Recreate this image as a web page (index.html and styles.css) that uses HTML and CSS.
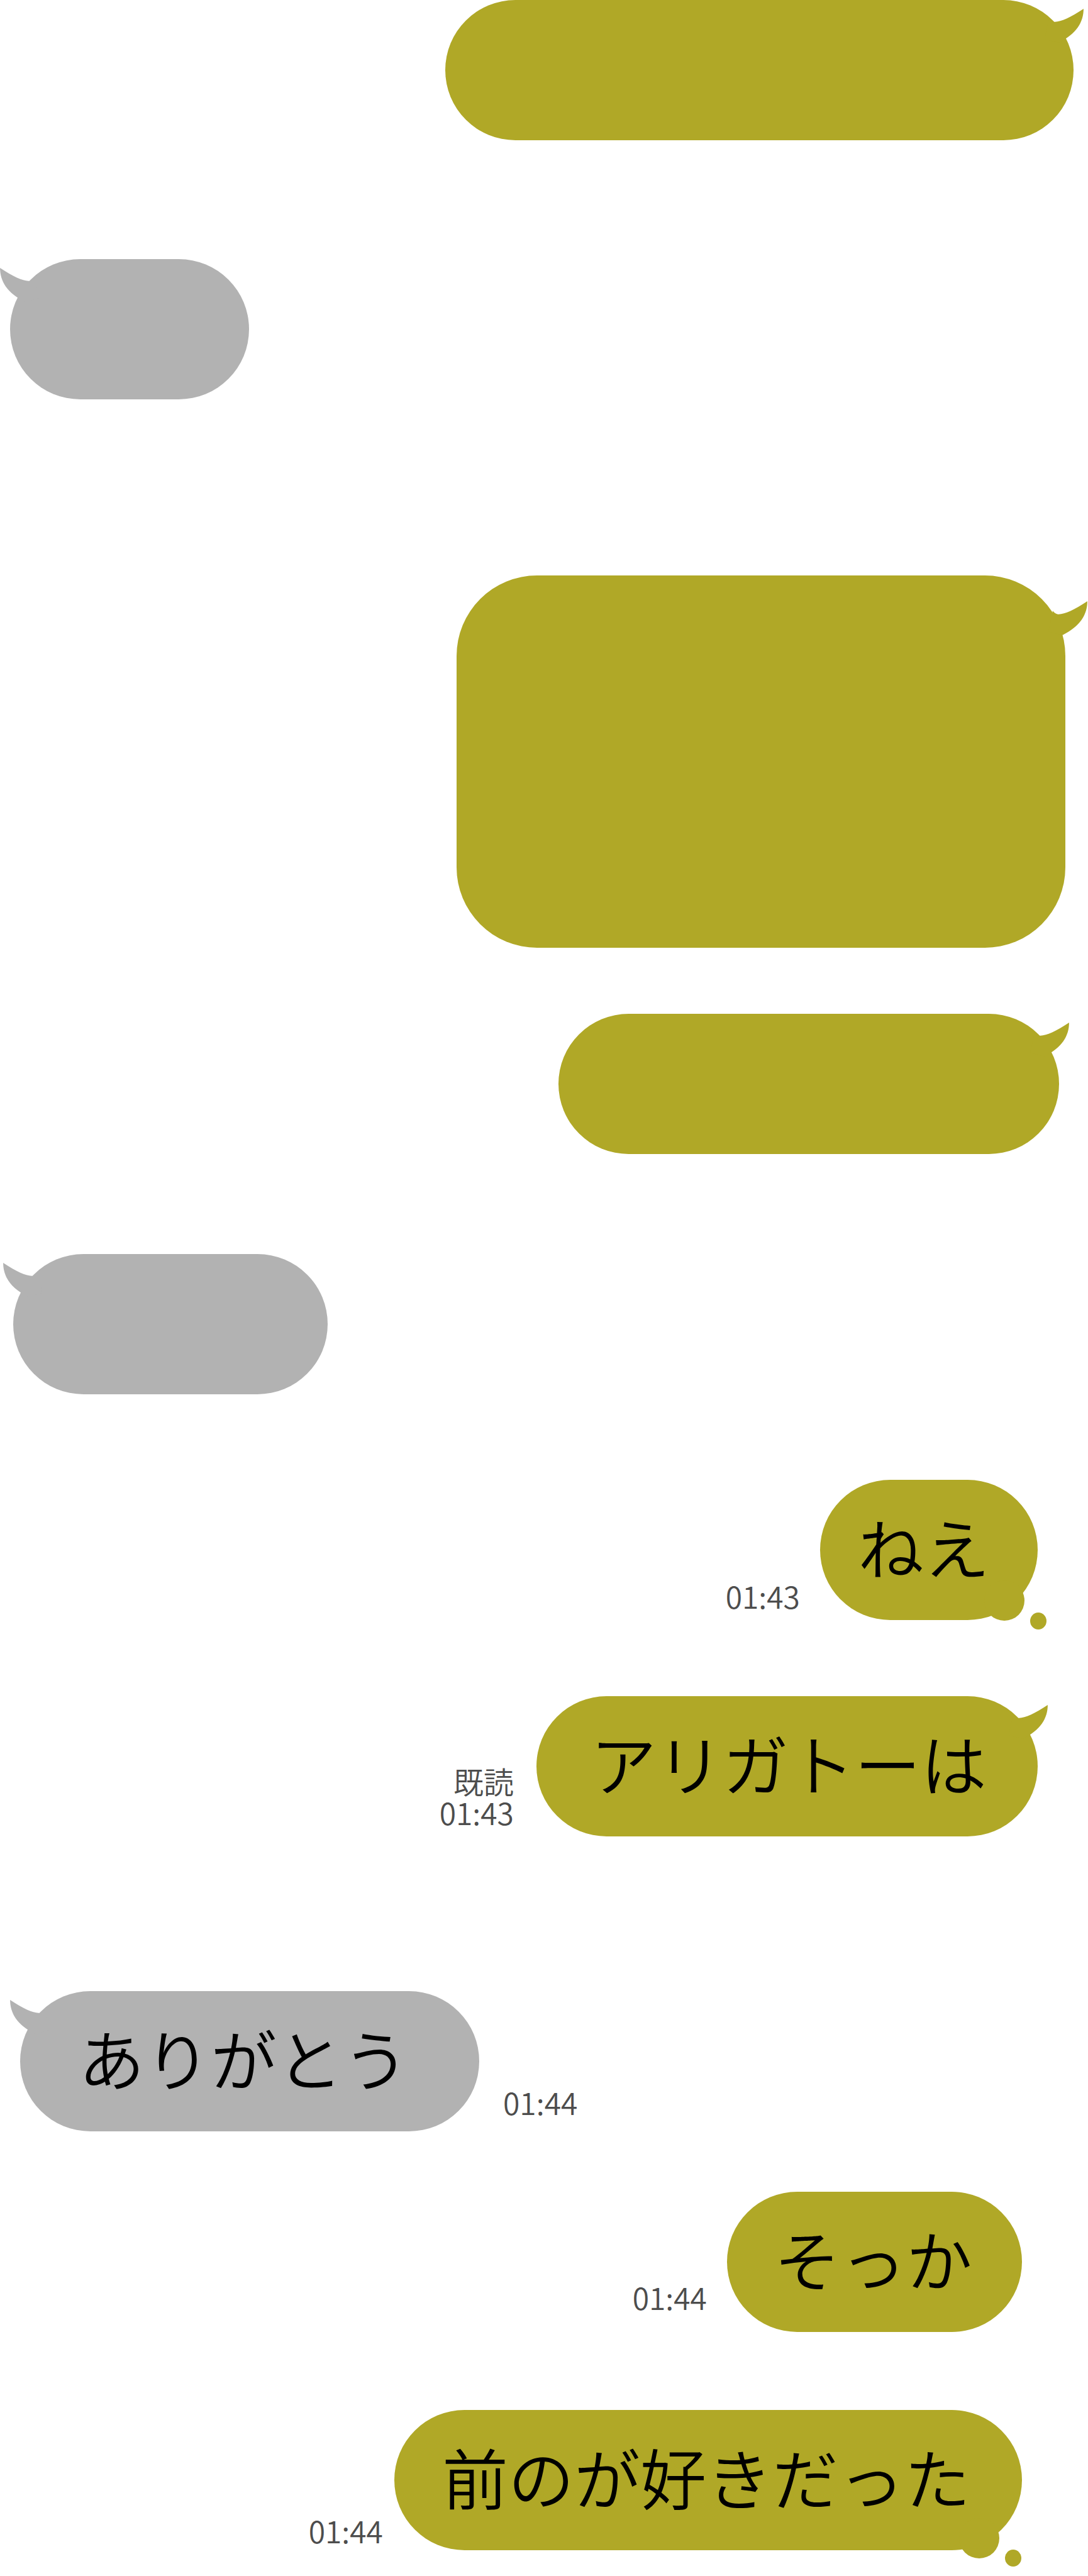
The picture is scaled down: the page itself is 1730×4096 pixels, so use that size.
FILE: index.html
```html
<!DOCTYPE html>
<html lang="ja">
<head>
<meta charset="utf-8">
<meta name="viewport" content="width=device-width, initial-scale=1">
<title>トーク</title>
<link rel="stylesheet" href="styles.css">
</head>
<body>
<svg class="defs" aria-hidden="true">
  <symbol id="tail" viewBox="-90 0 90 80">
    <path d="M0 0C-30 20-52 30-66 30C-72 30-77 26-80 22L-90 70L-57 78C-16 58 0 30 0 0Z"/>
  </symbol>
</svg>
<main class="talk">
  <div class="row sent first">
    <div class="bubble wide"><svg class="tail" aria-hidden="true"><use href="#tail"/></svg></div>
  </div>
  <div class="row received reply-short">
    <div class="bubble short"><svg class="tail" aria-hidden="true"><use href="#tail"/></svg></div>
  </div>
  <div class="row sent block">
    <div class="bubble tall"><svg class="tail" aria-hidden="true"><use href="#tail"/></svg></div>
  </div>
  <div class="row sent follow">
    <div class="bubble medium"><svg class="tail" aria-hidden="true"><use href="#tail"/></svg></div>
  </div>
  <div class="row received reply-long">
    <div class="bubble long"><svg class="tail" aria-hidden="true"><use href="#tail"/></svg></div>
  </div>
  <div class="row sent hey">
    <div class="meta"><time>01:43</time></div>
    <div class="bubble thought"><p>ねえ</p></div>
  </div>
  <div class="row sent thanks-q">
    <div class="meta"><span>既読</span><time>01:43</time></div>
    <div class="bubble"><p>アリガトーは</p><svg class="tail" aria-hidden="true"><use href="#tail"/></svg></div>
  </div>
  <div class="row received thanks">
    <div class="bubble"><p>ありがとう</p><svg class="tail" aria-hidden="true"><use href="#tail"/></svg></div>
    <div class="meta"><time>01:44</time></div>
  </div>
  <div class="row sent isee">
    <div class="meta"><time>01:44</time></div>
    <div class="bubble"><p>そっか</p></div>
  </div>
  <div class="row sent liked">
    <div class="meta"><time>01:44</time></div>
    <div class="bubble thought drop"><p>前のが好きだった</p></div>
  </div>
</main>
</body>
</html>
```
FILE: styles.css
```css
* { box-sizing: border-box; }

body {
  margin: 0;
  background: #fff;
  color: #000;
  font-family: "Noto Sans CJK JP", sans-serif;
  font-weight: 350;
}

.defs { position: absolute; width: 0; height: 0; }

.talk {
  display: flex;
  flex-direction: column;
  padding-bottom: 41px;
  overflow: hidden;
}

.row {
  display: flex;
  align-items: flex-end;
  gap: 36px;
}

.sent { justify-content: flex-end; --bubble: #b0a827; }
.received { justify-content: flex-start; --bubble: #b2b2b2; }

/* Bubbles */
.bubble {
  position: relative;
  display: flex;
  align-items: center;
  min-height: 223px;
  border-radius: 112px;
  background: var(--bubble);
  font-size: 105px;
  line-height: 120px;
  white-space: nowrap;
}

.bubble p { margin: 0; padding-bottom: 16px; }

.wide { width: 999px; }
.short { width: 380px; }
.medium { width: 796px; }
.long { width: 500px; }
.tall { width: 968px; min-height: 592px; border-radius: 128px; }

.tail {
  position: absolute;
  top: 14px;
  right: -16px;
  width: 62px;
  height: 55px;
  fill: var(--bubble);
}

.received .tail { right: auto; left: -16px; transform: scaleX(-1); }
.tall .tail { top: 41px; right: -35px; }

/* Thought trail: a large circle on the edge and a loose dot */
.thought::before,
.thought::after {
  content: "";
  position: absolute;
  border-radius: 50%;
  background: var(--bubble);
}

.thought::before { right: 21px; bottom: -1px; width: 64px; height: 64px; }
.thought::after { right: -14px; bottom: -15px; width: 26px; height: 27px; }
.drop::before { right: 36px; bottom: -13px; }
.drop::after { right: 1px; bottom: -26px; }

/* Read mark and time */
.meta {
  display: flex;
  flex-direction: column;
  align-items: flex-end;
  color: #4d4d4d;
  font-size: 48px;
  line-height: 50px;
}

/* Conversation rhythm */
.first { padding-right: 23px; }
.reply-short { margin-top: 189px; padding-left: 16px; }
.block { margin-top: 280px; padding-right: 36px; }
.follow { margin-top: 105px; padding-right: 46px; }
.reply-long { margin-top: 159px; padding-left: 21px; }

.hey { margin-top: 136px; padding-right: 80px; gap: 32px; }
.hey .bubble { padding: 0 76px 0 60px; }
.hey .meta { padding-bottom: 14px; }

.thanks-q { margin-top: 121px; padding-right: 80px; }
.thanks-q .bubble { padding: 0 81px 0 86px; }
.thanks-q .meta { padding-bottom: 14px; }

.thanks { margin-top: 246px; padding-left: 32px; gap: 38px; }
.thanks .bubble { padding: 0 112px 0 93px; }
.thanks .meta { padding-bottom: 22px; }

.isee { margin-top: 96px; padding-right: 105px; gap: 32px; }
.isee .bubble { padding: 0 79px 0 75px; }
.isee .meta { padding-bottom: 31px; }

.liked { margin-top: 124px; padding-right: 105px; gap: 18px; }
.liked .bubble { padding: 0 82px 0 76px; }
.liked .meta { padding-bottom: 7px; }
```
